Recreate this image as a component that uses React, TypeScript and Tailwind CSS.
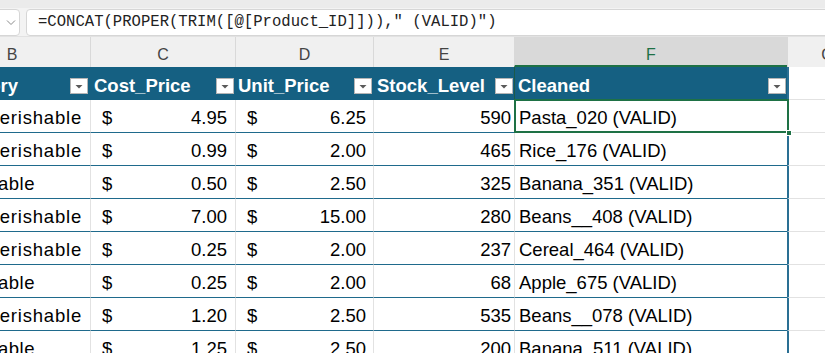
import React from "react";

type Row = { cat: string; long: boolean; c: string; d: string; e: string; f: string };

const rows: Row[] = [
  { cat: "Non-Perishable", long: true, c: "4.95", d: "6.25", e: "590", f: "Pasta_020 (VALID)" },
  { cat: "Non-Perishable", long: true, c: "0.99", d: "2.00", e: "465", f: "Rice_176 (VALID)" },
  { cat: "Perishable", long: false, c: "0.50", d: "2.50", e: "325", f: "Banana_351 (VALID)" },
  { cat: "Non-Perishable", long: true, c: "7.00", d: "15.00", e: "280", f: "Beans__408 (VALID)" },
  { cat: "Non-Perishable", long: true, c: "0.25", d: "2.00", e: "237", f: "Cereal_464 (VALID)" },
  { cat: "Perishable", long: false, c: "0.25", d: "2.00", e: "68", f: "Apple_675 (VALID)" },
  { cat: "Non-Perishable", long: true, c: "1.20", d: "2.50", e: "535", f: "Beans__078 (VALID)" },
  { cat: "Perishable", long: false, c: "1.25", d: "2.50", e: "200", f: "Banana_511 (VALID)" },
];

function FilterBtn() {
  return (
    <div className="w-[18px] h-[16px] mt-[11px] bg-white border border-[#b5b5b5] flex items-center justify-center shrink-0">
      <svg width="8" height="5" viewBox="0 0 8 5">
        <polygon points="0.5,1 7.5,1 4,4.5" fill="#5a5a5a" />
      </svg>
    </div>
  );
}

export default function App() {
  return (
    <div className="w-[825px] h-[353px] overflow-hidden bg-white font-['Liberation_Sans',Arial,sans-serif] text-[18.5px] text-black">
      {/* ribbon edge */}
      <div className="h-[8px] bg-[#ebebeb]" />
      {/* formula bar */}
      <div className="h-[29px] bg-[#f3f3f3] flex items-start pt-[1px] gap-[6px] border-b border-[#e2e2e2]">
        <div className="ml-[-40px] w-[60px] h-[27px] bg-white border border-[#d6d6d6] rounded-[4px] flex items-center justify-end pr-[3px] shrink-0">
          <svg width="10" height="7" viewBox="0 0 10 7">
            <polyline points="1,1.5 5,5.5 9,1.5" fill="none" stroke="#8a8a8a" strokeWidth="1" />
          </svg>
        </div>
        <div className="flex-1 mr-[-20px] h-[27px] bg-white border border-[#d6d6d6] rounded-[4px] flex items-center pl-[11px] font-['Liberation_Mono',monospace] text-[15.6px] text-[#222] whitespace-nowrap">
          =CONCAT(PROPER(TRIM([@[Product_ID]])),&quot; (VALID)&quot;)
        </div>
      </div>

      <div className="ml-[-66px] w-[1000px]">
        {/* column letters */}
        <div className="flex h-[30px] bg-[#f0f0f0] text-[16px] text-[#444] leading-[20px]">
          <div className="w-[156px] flex justify-center pt-[8px]">B</div>
          <div className="w-[145px] border-l border-[#d9d9d9] flex justify-center pt-[8px]">C</div>
          <div className="w-[138px] border-l border-[#d9d9d9] flex justify-center pt-[8px]">D</div>
          <div className="w-[141px] border-l border-[#d9d9d9] flex justify-center pt-[8px]">E</div>
          <div className="w-[273px] border-l border-[#d9d9d9] bg-[#d9d9d9] border-b-2 border-b-[#1e7145] flex justify-center pt-[8px] text-[#1e7145]">F</div>
          <div className="w-[80px] border-l border-[#d9d9d9] flex justify-center pt-[8px]">G</div>
        </div>

        {/* table header */}
        <div className="flex h-[33px] font-bold text-white leading-[22px]">
          <div className="w-[156px] bg-[#156082] flex justify-end pr-[2px]">
            <span className="pt-[8px] mr-[52px]">Category</span>
            <FilterBtn />
          </div>
          <div className="w-[145px] bg-[#156082] flex justify-between pl-[4px] pr-[1px]">
            <span className="pt-[8px]">Cost_Price</span>
            <FilterBtn />
          </div>
          <div className="w-[138px] bg-[#156082] flex justify-between pl-[3px] pr-[1px]">
            <span className="pt-[8px]">Unit_Price</span>
            <FilterBtn />
          </div>
          <div className="w-[141px] bg-[#156082] flex justify-between pl-[4px] pr-[1px]">
            <span className="pt-[8px]">Stock_Level</span>
            <FilterBtn />
          </div>
          <div className="w-[273px] bg-[#156082] border-l border-[#1b5a4a] flex justify-between pl-[3px] pr-[1px]">
            <span className="pt-[8px]">Cleaned</span>
            <FilterBtn />
          </div>
          <div className="w-[80px] bg-white border-l-2 border-l-[#2a6f93] border-b border-[#e2e2e2]" />
        </div>

        {/* data rows */}
        {rows.map((r, i) => (
          <div key={i} className="flex h-[33px] leading-[22px]">
            <div className="w-[156px] border-b border-[#1f6a8c] flex justify-end overflow-hidden whitespace-nowrap">
              <span className={r.long ? "pt-[7px] pr-[8px] tracking-[0.8px]" : "pt-[7px] pr-[55px] tracking-[0.5px]"}>{r.cat}</span>
            </div>
            <div className="w-[145px] border-l border-l-[#e2e2e2] border-b border-[#1f6a8c] flex justify-between pl-[11px] pr-[8px] pt-[7px]">
              <span>$</span>
              <span>{r.c}</span>
            </div>
            <div className="w-[138px] border-l border-l-[#e2e2e2] border-b border-[#1f6a8c] flex justify-between pl-[11px] pr-[7px] pt-[7px]">
              <span>$</span>
              <span>{r.d}</span>
            </div>
            <div className="w-[141px] border-l border-l-[#e2e2e2] border-b border-[#1f6a8c] flex justify-end pr-[3px] pt-[7px]">
              <span>{r.e}</span>
            </div>
            <div className="relative w-[273px] border-l border-l-[#e2e2e2] border-b border-[#1f6a8c] flex pl-[4px] pt-[7px] whitespace-nowrap">
              <span>{r.f}</span>
              {i === 0 && (
                <>
                  <div className="absolute top-[-1px] left-[-1px] right-[-2px] bottom-[-1px] border-2 border-[#1e7145]" />
                  <div className="absolute right-[-5px] bottom-[-4px] w-[6px] h-[6px] bg-[#1e7145] border border-white" />
                </>
              )}
            </div>
            <div className="w-[80px] border-l-2 border-l-[#2a6f93] border-b border-[#e2e2e2]" />
          </div>
        ))}
      </div>
    </div>
  );
}
